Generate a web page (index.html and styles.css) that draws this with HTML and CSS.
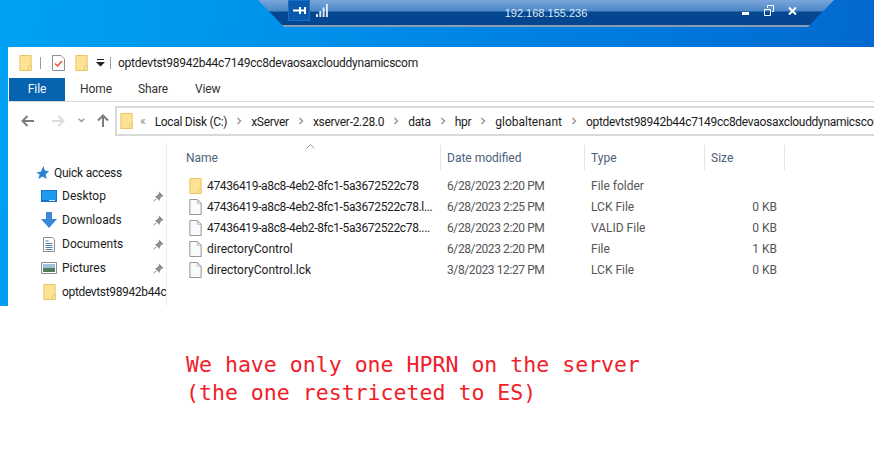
FILE: index.html
```html
<!DOCTYPE html>
<html lang="en">
<head>
<meta charset="utf-8">
<title>Explorer</title>
<link rel="stylesheet" href="styles.css">
</head>
<body>
<svg class="defs" width="0" height="0" aria-hidden="true">
  <symbol id="folder" viewBox="0 0 13 17">
    <path d="M.5.5h12v16H.5z" fill="#fde293" stroke="#e8c35a"/>
    <path d="M10 11.500h2.500v5H10z" fill="#fdf0c0" stroke="#e8c35a"/>
  </symbol>
  <symbol id="doc" viewBox="0 0 13 17">
    <path d="M.5.500H8.500L12.500 4.500V16.500H.5z" fill="#fafafa" stroke="#8e8e8e"/>
    <path d="M8.500.500V4.500H12.500" fill="none" stroke="#b4b4b4"/>
  </symbol>
  <symbol id="pin" viewBox="0 0 11 11">
    <path d="M6 .5l4.500 4.500-1.500.5-2 2-.5 2.500L1.800 5.300 4 4.800l1.700-2z" fill="#8f8f8f"/>
    <path d="M3.500 7.500L.5 10.500" stroke="#8f8f8f" fill="none"/>
  </symbol>
  <symbol id="sep" viewBox="0 0 6 8">
    <path d="M1.500 1l3 3-3 3" fill="none" stroke="#9a9a9a" stroke-width="1.500"/>
  </symbol>
</svg>

<div class="desktop">
  <div class="conn">
    <div class="conn-left">
      <span class="conn-pin">
        <svg width="13" height="9" viewBox="0 0 13 9"><path d="M0 4.500h12M7 1v7M12 1v7" stroke="#fff" stroke-width="2" fill="none"/></svg>
      </span>
      <svg width="12" height="13" viewBox="0 0 12 13"><path d="M0 10h2v3H0zM3.300 7h2v6h-2zM6.600 3.500h2V13h-2zM9.900 0h2v13h-2z" fill="#dfe9f5"/></svg>
    </div>
    <span class="conn-ip">192.168.155.236</span>
    <div class="conn-right">
      <svg width="8" height="4" viewBox="0 0 8 4"><path d="M0 0h7v3H0z" fill="#fff"/></svg>
      <svg width="10" height="11" viewBox="0 0 10 11"><path d="M.500 4.500h6v6h-6zM3.500 3V.500h6v6H8" fill="none" stroke="#fff"/></svg>
      <svg class="conn-close" width="9" height="8" viewBox="0 0 9 8"><path d="M1 .5l7 7M8 .5l-7 7" stroke="#fff" stroke-width="2" fill="none"/></svg>
    </div>
  </div>

  <div class="window">
    <div class="titlebar">
      <svg class="ic" width="13" height="16"><use href="#folder"/></svg>
      <span class="tsep"></span>
      <svg class="ic check" width="13" height="16" viewBox="0 0 13 16"><path d="M.5.500H9L12.500 4V15.500H.5z" fill="#fff" stroke="#8e8e8e"/><path d="M3 8.500l2.500 2.500L10 6" fill="none" stroke="#e2562a" stroke-width="1.500"/></svg>
      <svg class="ic" width="13" height="16"><use href="#folder"/></svg>
      <svg class="drop" width="9" height="8" viewBox="0 0 9 8"><path d="M1 0h7v1H1zM0 3h9L4.500 7.500z" fill="#222"/></svg>
      <span class="tsep tsep-b"></span>
      <span class="title">optdevtst98942b44c7149cc8devaosaxclouddynamicscom</span>
    </div>

    <div class="tabs">
      <span class="tab tab-file">File</span>
      <span class="tab tab-home">Home</span>
      <span class="tab tab-share">Share</span>
      <span class="tab">View</span>
    </div>

    <div class="navrow">
      <div class="navbtns">
        <svg width="14" height="12" viewBox="0 0 14 12"><path d="M13 6H2M6.500 1L1.500 6l5 5" fill="none" stroke="#7c7c7c" stroke-width="2"/></svg>
        <svg class="nav-fwd" width="14" height="12" viewBox="0 0 14 12"><path d="M1 6h11M7.500 1l5 5-5 5" fill="none" stroke="#dcdcdc" stroke-width="2"/></svg>
        <svg class="nav-hist" width="7" height="5" viewBox="0 0 7 5"><path d="M.7.700l2.800 2.800L6.300.700" fill="none" stroke="#9a9a9a" stroke-width="1.500"/></svg>
        <svg class="nav-up" width="12" height="13" viewBox="0 0 12 13"><path d="M6 13V2M1 6.500l5-5 5 5" fill="none" stroke="#7c7c7c" stroke-width="2"/></svg>
      </div>
      <div class="address">
        <svg class="ic" width="13" height="16"><use href="#folder"/></svg>
        <span class="chev">«</span>
        <span class="crumb-text">Local Disk (C:)</span>
        <svg class="crumb" width="6" height="8"><use href="#sep"/></svg>
        <span class="crumb-text">xServer</span>
        <svg class="crumb" width="6" height="8"><use href="#sep"/></svg>
        <span class="crumb-text">xserver-2.28.0</span>
        <svg class="crumb" width="6" height="8"><use href="#sep"/></svg>
        <span class="crumb-text">data</span>
        <svg class="crumb" width="6" height="8"><use href="#sep"/></svg>
        <span class="crumb-text">hpr</span>
        <svg class="crumb" width="6" height="8"><use href="#sep"/></svg>
        <span class="crumb-text crumb-wide">globaltenant</span>
        <svg class="crumb" width="6" height="8"><use href="#sep"/></svg>
        <span class="crumb-text">optdevtst98942b44c7149cc8devaosaxclouddynamicscom</span>
      </div>
    </div>

    <div class="main">
      <nav class="side">
        <div class="side-row side-qa">
          <svg width="14" height="14" viewBox="0 0 14 14"><path d="M8.500 0l1.300 4.600L14 5.200l-3.300 3 .9 4.800-4-2.500-4.200 2.500 1.200-4.800L1 6.500l4.800-.7z" fill="#2b7fd0"/></svg>
          <span class="qa-label">Quick access</span>
        </div>
        <div class="side-row">
          <svg class="side-ic" width="16" height="12" viewBox="0 0 16 12"><path d="M0 0h16v12H0z" fill="#1b6fc4"/><path d="M1 1h14v9H1z" fill="#1e9bee"/><path d="M8 10h6v1H8z" fill="#cfe6f8"/></svg>
          <span class="side-label">Desktop</span>
          <svg class="pin" width="11" height="11"><use href="#pin"/></svg>
        </div>
        <div class="side-row">
          <svg class="side-ic" width="16" height="16" viewBox="0 0 16 16"><path d="M5 0h6v7h5l-8 9-8-9h5z" fill="#3b87d8"/></svg>
          <span class="side-label">Downloads</span>
          <svg class="pin" width="11" height="11"><use href="#pin"/></svg>
        </div>
        <div class="side-row">
          <svg class="side-ic" width="16" height="15" viewBox="0 0 16 15"><path d="M2.500.5h9l2 2v12h-11z" fill="#fff" stroke="#8d8d8d"/><path d="M4.500 4h3M4.500 6.500h7M4.500 8.500h7M4.500 10.500h7M4.500 12.500h7" stroke="#4d7fa8"/></svg>
          <span class="side-label">Documents</span>
          <svg class="pin" width="11" height="11"><use href="#pin"/></svg>
        </div>
        <div class="side-row">
          <svg class="side-ic" width="16" height="12" viewBox="0 0 16 12"><path d="M.5.500h15v11H.5z" fill="#fff" stroke="#8d8d8d"/><path d="M2 2h12v4H2z" fill="#9cc2dc"/><path d="M2 6h12v4H2z" fill="#4f7d5e"/></svg>
          <span class="side-label">Pictures</span>
          <svg class="pin" width="11" height="11"><use href="#pin"/></svg>
        </div>
        <div class="side-row side-folder">
          <svg class="side-ic" width="13" height="16"><use href="#folder"/></svg>
          <span class="side-clip">optdevtst98942b44c7149cc8devaosaxclouddynamicscom</span>
        </div>
      </nav>

      <section class="list">
        <svg class="sort" width="9" height="5" viewBox="0 0 9 5"><path d="M.5 4.500l4-4 4 4" fill="none" stroke="#9a9a9a"/></svg>
        <div class="head">
          <span>Name</span>
          <span>Date modified</span>
          <span>Type</span>
          <span>Size</span>
        </div>
        <div class="rows">
          <div class="row">
            <svg class="ic" width="13" height="16"><use href="#folder"/></svg>
            <span class="name digits">47436419-a8c8-4eb2-8fc1-5a3672522c78</span>
            <span class="meta date">6/28/2023 2:20 PM</span>
            <span class="meta">File folder</span>
            <span class="meta size"></span>
          </div>
          <div class="row">
            <svg class="ic" width="13" height="16"><use href="#doc"/></svg>
            <span class="name digits">47436419-a8c8-4eb2-8fc1-5a3672522c78.l...</span>
            <span class="meta date">6/28/2023 2:25 PM</span>
            <span class="meta">LCK File</span>
            <span class="meta size">0 KB</span>
          </div>
          <div class="row">
            <svg class="ic" width="13" height="16"><use href="#doc"/></svg>
            <span class="name digits">47436419-a8c8-4eb2-8fc1-5a3672522c78....</span>
            <span class="meta date">6/28/2023 2:20 PM</span>
            <span class="meta">VALID File</span>
            <span class="meta size">0 KB</span>
          </div>
          <div class="row">
            <svg class="ic" width="13" height="16"><use href="#doc"/></svg>
            <span class="name">directoryControl</span>
            <span class="meta date">6/28/2023 2:20 PM</span>
            <span class="meta">File</span>
            <span class="meta size">1 KB</span>
          </div>
          <div class="row">
            <svg class="ic" width="13" height="16"><use href="#doc"/></svg>
            <span class="name">directoryControl.lck</span>
            <span class="meta date">3/8/2023 12:27 PM</span>
            <span class="meta">LCK File</span>
            <span class="meta size">0 KB</span>
          </div>
        </div>
      </section>
    </div>
  </div>
</div>

<p class="note">We have only one HPRN on the server<br>(the one restriceted to ES)</p>
</body>
</html>
```

FILE: styles.css
```css
* { box-sizing: border-box; }
html, body { margin: 0; height: 457px; overflow: hidden; background: #fff; }
body { font: 12px/16px Roboto, sans-serif; color: #1c1c1c; position: relative; }
.defs { position: absolute; }
svg { display: block; flex: none; }

.desktop {
  height: 306px;
  padding: 47px 0 0 8px;
  background: linear-gradient(100deg, #00a2f2 0%, #0090ea 35%, #0079dd 70%, #0365cb 100%);
  overflow: hidden;
}

.conn {
  position: absolute;
  top: 0;
  left: 258px;
  width: 576px;
  height: 27px;
  padding: 0 37px 6px 30px;
  display: flex;
  align-items: center;
  clip-path: polygon(0 0, 100% 0, calc(100% - 26px) 100%, 26px 100%);
  background: linear-gradient(#7ba6da 0, #4b87c7 11px, #04468f 12px, #04468f 25px, #8b9bb2 25px);
}
.conn-left { display: flex; align-items: center; gap: 6px; width: 100px; }
.conn-pin {
  width: 22px; height: 21px;
  display: flex; align-items: center; justify-content: center;
  background: #0b59ad;
  border: 1px solid #1a6ec5;
  flex: none;
}
.conn-ip { flex: 1; margin-top: 4px; text-align: center; font: 11px/14px "Liberation Sans", sans-serif; color: #dfe9f5; padding-right: 38px; }
.conn-right { display: flex; align-items: flex-end; gap: 14px; }
.conn-close { margin-bottom: 1px; }

.window {
  height: 259px;
  background: #fff;
  display: flex;
  flex-direction: column;
  overflow: hidden;
}

.titlebar { height: 31px; padding-left: 11px; display: flex; align-items: center; }
.tsep { width: 1px; height: 12px; background: #9d9d9d; margin: 0 11px 0 8px; }
.check { margin-right: 10px; }
.drop { margin-left: 8px; }
.tsep-b { margin: 0 7px 0 5px; }
.title { white-space: nowrap; letter-spacing: -.25px; }

.tabs { height: 24px; display: flex; border-bottom: 1px solid #d9d9d9; }
.tab { height: 23px; line-height: 23px; padding: 0 15px 0 14px; color: #333; letter-spacing: -.1px; }
.tab-file { width: 56px; margin: 0 0 0 1px; padding: 0; text-align: center; background: #0563af; color: #fff; }
.tab-home { padding-left: 15px; width: 58px; }
.tab-share { width: 58px; padding-left: 15px; }

.navrow { height: 41px; padding: 3px 0 7px 13px; display: flex; align-items: center; }
.navbtns { width: 94px; display: flex; align-items: center; }
.nav-fwd { margin-left: 16px; }
.nav-hist { margin-left: 13px; }
.nav-up { margin-left: 12px; }
.address {
  flex: 1;
  height: 30px;
  margin-right: -200px;
  padding-left: 3px;
  display: flex;
  align-items: center;
  border: 2px solid #d9d9d9;
  border-right: 0;
  white-space: nowrap;
}
.crumb-text { letter-spacing: -.3px; margin-top: 2px; }
.crumb-wide { letter-spacing: 0; }
.chev { margin: 0 9px 0 7px; color: #888; }
.crumb { margin: 0 9px; }

.main { flex: 1; display: flex; min-height: 0; }
.side {
  width: 159px;
  padding: 18px 0 0 0;
  border-right: 1px solid #eee;
  overflow: hidden;
  flex: none;
}
.side-row { height: 24px; display: flex; align-items: center; padding-left: 33px; position: relative; }
.side-qa { height: 23px; padding-left: 27px; gap: 5px; }
.qa-label { letter-spacing: -.25px; }
.side-label { width: 91px; margin-left: 5px; }
.side-folder { padding-left: 35px; gap: 6px; }
.side-clip { white-space: nowrap; letter-spacing: -.35px; }

.list { flex: 1; position: relative; padding-left: 19px; }
.sort { position: absolute; left: 139px; top: 1px; }
.head {
  display: grid;
  grid-template-columns: 255px 144px 120px 80px;
  height: 25px;
  margin-top: 2px;
  color: #4c607a;
  line-height: 27px;
}
.head span { padding-left: 6px; border-right: 1px solid #e5e5e5; height: 25px; }
.head span:first-child { padding-left: 0; }
.rows { padding-top: 5px; }
.row {
  display: grid;
  grid-template-columns: 13px 239px 144px 120px 72px;
  height: 21px;
  align-items: center;
  padding-left: 3px;
  white-space: nowrap;
}
.name { padding-left: 5px; }
.digits { letter-spacing: -.35px; }
.meta { padding-left: 6px; color: #555; }
.date { letter-spacing: -.4px; }
.size { text-align: right; padding: 0; }

.note {
  margin: 0;
  padding: 45px 0 0 186px;
  font: 21.550px/28px "DejaVu Sans Mono", monospace;
  color: #f0202a;
}
```
